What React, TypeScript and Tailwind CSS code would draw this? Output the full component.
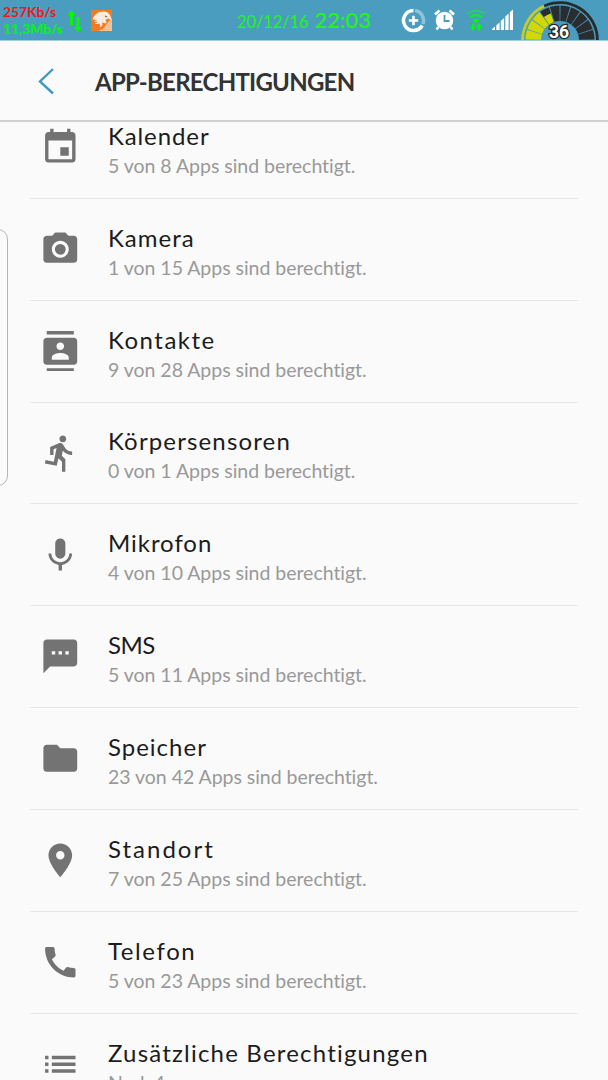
import { twMerge } from "tailwind-merge";

type Permission = {
  title: string;
  summary: string;
  titleClass: string;
  summaryClass?: string;
  path: string;
};

const PERMISSIONS: Permission[] = [
  {
    title: "Kalender",
    summary: "5 von 8 Apps sind berechtigt.",
    titleClass: "tracking-[0.9px]",
    path: "M17 12h-5v5h5v-5zM16 1v2H8V1H6v2H5c-1.11 0-1.99.9-1.99 2L3 19c0 1.1.89 2 2 2h14c1.1 0 2-.9 2-2V5c0-1.1-.9-2-2-2h-1V1h-2zm3 18H5V8h14v11z",
  },
  {
    title: "Kamera",
    summary: "1 von 15 Apps sind berechtigt.",
    titleClass: "tracking-[1px]",
    path: "M12 8.8a3.2 3.2 0 1 0 0 6.4a3.2 3.2 0 1 0 0-6.4zM9 2L7.17 4H4c-1.1 0-2 .9-2 2v12c0 1.1.9 2 2 2h16c1.1 0 2-.9 2-2V6c0-1.1-.9-2-2-2h-3.17L15 2H9zm3 15c-2.76 0-5-2.24-5-5s2.24-5 5-5 5 2.24 5 5-2.24 5-5 5z",
  },
  {
    title: "Kontakte",
    summary: "9 von 28 Apps sind berechtigt.",
    titleClass: "tracking-[1.5px]",
    path: "M20 0H4v2h16V0zM4 24h16v-2H4v2zM20 4H4c-1.1 0-2 .9-2 2v12c0 1.1.9 2 2 2h16c1.1 0 2-.9 2-2V6c0-1.1-.9-2-2-2zm-8 2.75c1.24 0 2.25 1.01 2.25 2.25s-1.01 2.25-2.25 2.25S9.75 10.24 9.75 9 10.76 6.75 12 6.75zM17 17H7v-1.5c0-1.67 3.33-2.5 5-2.5s5 .83 5 2.5V17z",
  },
  {
    title: "Körpersensoren",
    summary: "0 von 1 Apps sind berechtigt.",
    titleClass: "tracking-[1.15px]",
    path: "M13.49 5.48c1.1 0 2-.9 2-2s-.9-2-2-2-2 .9-2 2 .9 2 2 2zm-3.6 13.9l1-4.4 2.1 2v6h2v-7.5l-2.1-2 .6-3c1.3 1.5 3.3 2.5 5.5 2.5v-2c-1.9 0-3.5-1-4.3-2.4l-1-1.6c-.4-.6-1-1-1.7-1-.3 0-.5.1-.8.1l-5.2 2.2v4.7h2v-3.4l1.8-.7-1.6 8.1-4.9-1-.4 2 7 1.4z",
  },
  {
    title: "Mikrofon",
    summary: "4 von 10 Apps sind berechtigt.",
    titleClass: "tracking-[0.95px]",
    path: "M12 14c1.66 0 2.99-1.34 2.99-3L15 5c0-1.66-1.34-3-3-3S9 3.34 9 5v6c0 1.66 1.34 3 3 3zm5.3-3c0 3-2.54 5.1-5.3 5.1S6.7 14 6.7 11H5c0 3.41 2.72 6.23 6 6.72V21h2v-3.28c3.28-.48 6-3.3 6-6.72h-1.7z",
  },
  {
    title: "SMS",
    summary: "5 von 11 Apps sind berechtigt.",
    titleClass: "tracking-[-0.5px]",
    path: "M20 2H4c-1.1 0-1.99.9-1.99 2L2 22l4-4h14c1.1 0 2-.9 2-2V4c0-1.1-.9-2-2-2zM9 11H7V9h2v2zm4 0h-2V9h2v2zm4 0h-2V9h2v2z",
  },
  {
    title: "Speicher",
    summary: "23 von 42 Apps sind berechtigt.",
    titleClass: "tracking-[1px]",
    path: "M10 4H4c-1.1 0-1.99.9-1.99 2L2 18c0 1.1.9 2 2 2h16c1.1 0 2-.9 2-2V8c0-1.1-.9-2-2-2h-8l-2-2z",
  },
  {
    title: "Standort",
    summary: "7 von 25 Apps sind berechtigt.",
    titleClass: "tracking-[2px]",
    path: "M12 2C8.13 2 5 5.13 5 9c0 5.25 7 13 7 13s7-7.75 7-13c0-3.87-3.13-7-7-7zm0 9.5c-1.38 0-2.5-1.12-2.5-2.5s1.12-2.5 2.5-2.5 2.5 1.12 2.5 2.5-1.12 2.5-2.5 2.5z",
  },
  {
    title: "Telefon",
    summary: "5 von 23 Apps sind berechtigt.",
    titleClass: "tracking-[1.6px]",
    path: "M20.01 15.38c-1.23 0-2.42-.2-3.53-.56-.35-.12-.74-.03-1.01.24l-1.57 1.97c-2.83-1.35-5.48-3.9-6.89-6.83l1.95-1.66c.27-.28.35-.67.24-1.02-.37-1.11-.56-2.3-.56-3.53 0-.54-.45-.99-.99-.99H4.19C3.65 3 3 3.24 3 3.99 3 13.28 10.73 21 20.01 21c.71 0 .99-.63.99-1.18v-3.45c0-.54-.45-.99-.99-.99z",
  },
  {
    title: "Zusätzliche Berechtigungen",
    summary: "Noch 4",
    titleClass: "tracking-[1.2px]",
    summaryClass: "tracking-[-1px]",
    path: "M3 13h2v-2H3v2zm0 4h2v-2H3v2zm0-8h2V7H3v2zm4 4h14v-2H7v2zm0 4h14v-2H7v2zM7 7v2h14V7H7z",
  },
];

// Point on the gauge, degrees run clockwise from the left end
const point = (r: number, deg: number) => {
  const a = (deg * Math.PI) / 180;
  return `${(39 - r * Math.cos(a)).toFixed(2)} ${(40 - r * Math.sin(a)).toFixed(2)}`;
};

const wedge = (inner: number, outer: number, from: number, to: number) =>
  `M${point(inner, from)}L${point(outer, from)}A${outer} ${outer} 0 0 1 ${point(outer, to)}L${point(inner, to)}A${inner} ${inner} 0 0 0 ${point(inner, from)}Z`;

const BatteryGauge = () => (
  <svg className="h-10 w-[78px]" viewBox="0 0 78 40">
    <path d={wedge(36, 38.8, 0, 65)} fill="#c3cc2c" />
    <path d={wedge(36, 38.8, 65, 180)} fill="#262b2e" />
    {Array.from({ length: 10 }, (_, i) => (
      <path
        key={i}
        d={wedge(19, 34.5, i * 18 + 0.8, (i + 1) * 18 - 0.8)}
        fill={i < 3 ? "#d2d800" : "#2a2d2f"}
      />
    ))}
    <path d={wedge(19, 28, 54.8, 71)} fill="#d2d800" />
    <text
      x="38"
      y="37.5"
      textAnchor="middle"
      className="font-['Roboto'] text-[17.5px] font-bold"
      fill="#fff"
      stroke="#25292b"
      strokeWidth="2.6"
      paintOrder="stroke"
    >
      36
    </text>
  </svg>
);

const StatusBar = () => (
  <section className="flex h-[41px] shrink-0 items-start border-b border-[#a5cfe0] bg-[#4a9dbf]">
    <div className="w-[64px] shrink-0 pl-[3px] pt-[3px] text-[14px] font-bold leading-[17px]">
      <p className="whitespace-nowrap tracking-[-0.1px] text-[#f51616]">257Kb/s</p>
      <p className="whitespace-nowrap tracking-[-0.1px] text-[#08f60c]">11,3Mb/s</p>
    </div>

    {/* Traffic arrows */}
    <svg className="mt-[9px] h-[24px] w-[20px] shrink-0" viewBox="0 0 20 24" fill="#08f60c">
      <path d="M7.500 1l4 5H9v10H6V6H3.500zM14 23l-4-5h2.500V8h3v10H18z" />
    </svg>

    {/* Browser notification */}
    <svg className="ml-[7px] mt-[10px] size-[21px] shrink-0" viewBox="0 0 21 21">
      <path d="M0 0h21v21H0z" fill="#f47a1c" />
      <path d="M21 8v13H7c4-1 6-3 8-6 1-2 3-4 6-7z" fill="#f9c08f" />
      <path
        d="M1.500 9.500C3 5 7 1.500 12.500 1.500c4.500 0 7.500 3 7.700 8.500l-2.200-1.200c-2-.3-3 .2-3.500 1.700 1.500 1 1.500 2.500-.5 3-1-.8-2.200-1-3-.5 1 1.500.5 3-2 4 .3-1.500 0-2.500-.8-3.500-1.700.8-3.400.8-4.700-.1 1.500 0 2.500-.5 3-1.400-1.500.2-2.700 0-3.500-.8 1.500 0 2.500-.4 3-1.200z"
        fill="#f6ebe1"
      />
      <path d="M14 5.500l3 1.500-2.500.2z" fill="#7a4c30" />
    </svg>

    <p className="ml-[125px] flex w-[140px] shrink-0 items-baseline gap-[6px] whitespace-nowrap leading-[40px] text-[#25f51c]">
      <span className="text-[16.5px] tracking-[-0.1px]">20/12/16</span>
      <span className="text-[22px] font-medium">22:03</span>
    </p>

    <div className="ml-auto mr-[9px] flex items-start">
      {/* Data saver */}
      <svg className="mt-[8px] size-[25px]" viewBox="0 0 25 25" fill="none">
        <path d="M12.5 2.5A10 10 0 1 0 21.2 17.5" stroke="#fff" strokeWidth="3.5" />
        <path d="M14 2.6A10 10 0 0 1 21.9 16" stroke="#8fc3d9" strokeWidth="3.5" />
        <path d="M12.5 7.8v9.4M7.8 12.5h9.4" stroke="#fff" strokeWidth="2.6" />
      </svg>

      {/* Alarm */}
      <svg className="ml-[7px] mt-[9px] h-[22px] w-[23px]" viewBox="0 0 22 22">
        <path d="M1.5 5.5L6 1.5M20.5 5.5L16 1.5M5 18l-2 2.5M17 18l2 2.5" stroke="#fff" strokeWidth="2.6" />
        <circle cx="11" cy="11.5" r="8.8" fill="#fff" />
        <path d="M11 6v6h5" fill="none" stroke="#4a9dbf" strokeWidth="1.8" />
      </svg>

      {/* Wifi */}
      <svg className="ml-[10px] mt-[9px] h-[23px] w-[20px]" viewBox="0 0 20 23" fill="none">
        <path d="M1.5 5c5-4.5 12-4.5 17 0" stroke="#2fc976" strokeWidth="2.4" />
        <path d="M4.2 8.4c3.6-3 8-3 11.600 0" stroke="#12e83c" strokeWidth="2.4" />
        <path d="M7 11.4c1.800-1.500 4.200-1.500 6 0L10 14z" fill="#08f60c" stroke="#08f60c" strokeWidth=".8" />
        <path d="M5.800 14.500h2.400v3.300h2.100L7 21.800l-3.300-4h2.100zM12 21.500v-3.300H9.900l3.300-4 3.300 4h-2.100v3.300z" fill="#08f60c" />
      </svg>

      {/* Signal */}
      <svg className="ml-[6px] mt-[9px] h-[22px] w-[21px]" viewBox="0 0 21 22" fill="#fff">
        <path d="M0 20l3-2.5V21H0zM4.3 16.2l3.300-2.700V21H4.3zM8.8 12l3.300-3V21H8.8zM13.3 7.5l3.300-3V21h-3.300zM17.8 3.300L21 .5V21h-3.200z" />
      </svg>

      <div className="ml-[8px]">
        <BatteryGauge />
      </div>
    </div>
  </section>
);

const PermissionRow = ({ title, summary, titleClass, summaryClass, path }: Permission) => (
  <li className="flex h-[101.85px] items-center border-b-[1.5px] border-[#e6e6e6] pl-[10.4px]">
    <svg className="size-[40.6px] shrink-0" viewBox="0 0 24 24" fill="#737373">
      <path d={path} />
    </svg>
    <div className="ml-[27px] flex flex-col whitespace-nowrap pt-[7px] [font-variant-ligatures:none]">
      <p className={twMerge("text-[24px] leading-[30px] text-[#1c1c1c]", titleClass)}>{title}</p>
      <p className={twMerge("text-[19.5px] leading-[30px] tracking-[-0.03px] text-[#999]", summaryClass)}>{summary}</p>
    </div>
  </li>
);

export default function App() {
  return (
    <main className="relative flex h-[1080px] w-[608px] flex-col overflow-hidden bg-[#fafafa] font-['Lato',sans-serif]">
      <StatusBar />

      <header className="flex h-[81px] shrink-0 items-center border-b-2 border-[#cfcfcf] pl-[36px]">
        <svg className="h-[28px] w-[20px]" viewBox="0 0 20 28" fill="none">
          <path d="M17 2L4 14.5 17 26.5" stroke="#3d9bc0" strokeWidth="2.4" />
        </svg>
        <h1 className="ml-[39px] whitespace-nowrap pt-[2px] text-[24px] font-bold tracking-[-0.75px] text-[#333]">
          APP-BERECHTIGUNGEN
        </h1>
      </header>

      <section className="min-h-0 flex-1 overflow-hidden">
        <ul className="-mt-[25px] ml-[30px] mr-[30px]">
          {PERMISSIONS.map((permission) => (
            <PermissionRow key={permission.title} {...permission} />
          ))}
        </ul>
      </section>

      {/* Edge panel handle */}
      <div className="absolute -left-[20px] top-[229px] h-[257px] w-[28px] rounded-[10px] border border-[#b5b5b5]" />
    </main>
  );
}
